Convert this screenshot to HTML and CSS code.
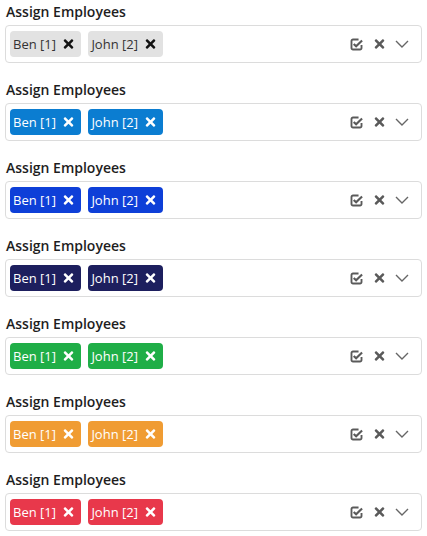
FILE: index.html
```html
<!DOCTYPE html>
<html>
<head>
<meta charset="utf-8">
<link rel="stylesheet" href="styles.css">
</head>
<body>
<div class="page">
  <div class="field">
    <div class="label">Assign Employees</div>
    <div class="select">
      <div class="chips">
        <span class="chip c-gray">Ben [1] <svg class="chip-x" viewBox="0 0 352 512"><path d="M242.72 256l100.07-100.07c12.28-12.28 12.28-32.19 0-44.48l-22.24-22.24c-12.28-12.28-32.19-12.28-44.48 0L176 189.28 75.93 89.21c-12.28-12.28-32.19-12.28-44.48 0L9.21 111.45c-12.28 12.28-12.28 32.19 0 44.48L109.28 256 9.21 356.07c-12.28 12.28-12.28 32.19 0 44.48l22.24 22.24c12.28 12.28 32.2 12.28 44.48 0L176 322.72l100.07 100.07c12.28 12.28 32.2 12.28 44.48 0l22.24-22.24c12.28-12.28 12.28-32.19 0-44.48L242.72 256z"/></svg></span>
        <span class="chip c-gray">John [2] <svg class="chip-x" viewBox="0 0 352 512"><path d="M242.72 256l100.07-100.07c12.28-12.28 12.28-32.19 0-44.48l-22.24-22.24c-12.28-12.28-32.19-12.28-44.48 0L176 189.28 75.93 89.21c-12.28-12.28-32.19-12.28-44.48 0L9.21 111.45c-12.28 12.28-12.28 32.19 0 44.48L109.28 256 9.21 356.07c-12.28 12.28-12.28 32.19 0 44.48l22.24 22.24c12.28 12.28 32.2 12.28 44.48 0L176 322.72l100.07 100.07c12.28 12.28 32.2 12.28 44.48 0l22.24-22.24c12.28-12.28 12.28-32.19 0-44.48L242.72 256z"/></svg></span>
      </div>
      <div class="tools">
        <svg class="t-check" viewBox="0 0 14 14"><path d="M9.2 1.6H3.2A1.6 1.6 0 0 0 1.6 3.2v7.6A1.6 1.6 0 0 0 3.2 12.4h7.6a1.6 1.6 0 0 0 1.6-1.6V7.6" fill="none" stroke="currentColor" stroke-width="2"/><path d="M4 6.4l2.6 2.6 6.4-6.4" fill="none" stroke="currentColor" stroke-width="2.3"/></svg>
        <svg class="t-x" viewBox="0 0 352 512"><path d="M242.72 256l100.07-100.07c12.28-12.28 12.28-32.19 0-44.48l-22.24-22.24c-12.28-12.28-32.19-12.28-44.48 0L176 189.28 75.93 89.21c-12.28-12.28-32.19-12.28-44.48 0L9.21 111.45c-12.28 12.28-12.28 32.19 0 44.48L109.28 256 9.21 356.07c-12.28 12.28-12.28 32.19 0 44.48l22.24 22.24c12.28 12.28 32.2 12.28 44.48 0L176 322.72l100.07 100.07c12.28 12.28 32.2 12.28 44.48 0l22.24-22.24c12.28-12.28 12.28-32.19 0-44.48L242.72 256z"/></svg>
        <svg class="t-chev" viewBox="0 0 14 8"><path d="M1 1l6 6 6-6" fill="none" stroke="currentColor" stroke-width="1.4"/></svg>
      </div>
    </div>
  </div>
</div>
<script src="app.js"></script>
</body>
</html>
```

FILE: app.js
```js
(function(){
  var page = document.querySelector('.page');
  var tpl = page.querySelector('.field');
  var colors = ['c-blue','c-royal','c-navy','c-green','c-orange','c-red'];
  colors.forEach(function(c){
    var f = tpl.cloneNode(true);
    f.querySelectorAll('.chip').forEach(function(ch){
      ch.classList.remove('c-gray');
      ch.classList.add(c);
    });
    page.appendChild(f);
  });
})();
```

FILE: styles.css
```css
html, body {
  margin: 0;
  padding: 0;
  background: #fff;
}
body {
  font-family: "Open Sans", "Liberation Sans", sans-serif;
  color: #222;
}
.page {
  padding: 2px 5px 0 5px;
  display: flex;
  flex-direction: column;
  gap: 17px;
}
.field {
  display: flex;
  flex-direction: column;
  gap: 3px;
}
.label {
  font-size: 14px;
  font-weight: 600;
  line-height: 20px;
  color: #1e1e1e;
  padding-left: 1px;
}
.select {
  box-sizing: border-box;
  height: 38px;
  border: 1px solid #dcdcdc;
  border-radius: 4px;
  display: flex;
  align-items: center;
  justify-content: space-between;
  padding: 0 12px 0 4px;
}
.chips {
  display: flex;
  gap: 7px;
}
.chip {
  display: inline-flex;
  align-items: center;
  height: 26px;
  box-sizing: border-box;
  padding: 0 7px 0 3px;
  border-radius: 4px;
  font-size: 13px;
  line-height: 26px;
  white-space: pre;
}
.chip-x {
  width: 11px;
  height: 14px;
  margin-left: 4px;
  fill: currentColor;
}
.c-gray { background: #e2e2e2; color: #333; }
.c-gray .chip-x { fill: #111; }
.c-blue { background: #0b7dd1; color: #fff; }
.c-royal { background: #0e3fd8; color: #fff; }
.c-navy { background: #1d1f5e; color: #fff; }
.c-green { background: #1fae47; color: #fff; }
.c-orange { background: #f09c33; color: #fff; }
.c-red { background: #e8384b; color: #fff; }
.tools {
  display: flex;
  align-items: center;
  color: #5a5a5a;
}
.t-check {
  width: 13px;
  height: 13px;
}
.t-x {
  width: 11px;
  height: 14px;
  fill: #5a5a5a;
  margin-left: 11px;
}
.t-chev {
  width: 14px;
  height: 8px;
  margin-left: 10px;
  color: #666;
}
```
